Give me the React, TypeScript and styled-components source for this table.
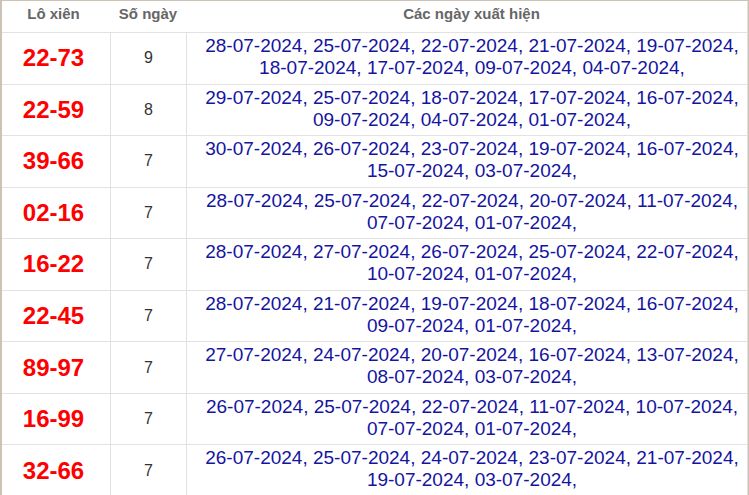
import React from "react";
import styled, { createGlobalStyle } from "styled-components";

const GlobalStyle = createGlobalStyle`
  html, body { margin: 0; padding: 0; background: #fff; }
  body { font-family: "Liberation Sans", Arial, sans-serif; }
`;

const Frame = styled.div`
  width: 749px;
  box-sizing: border-box;
  border-top: 1px solid #cdc2b6;
  border-left: 2px solid #cdc2b6;
  border-right: 1px solid #cdc2b6;
`;

const Table = styled.div`
  border-right: 1px solid #e2e2e2;
`;

const HeaderRow = styled.div`
  display: grid;
  grid-template-columns: 108px 76px 1fr;
  height: 32px;
  box-sizing: border-box;
  border-bottom: 1px solid #e2e2e2;
`;

const HeadCell = styled.div<{ $padLeft?: number; $padRight?: number }>`
  padding-top: 4px;
  padding-left: ${(p) => p.$padLeft ?? 0}px;
  padding-right: ${(p) => p.$padRight ?? 0}px;
  text-align: center;
  font-size: 15px;
  line-height: 18px;
  font-weight: bold;
  color: #666;
`;

const Row = styled.div`
  display: grid;
  grid-template-columns: 108px 76px 1fr;
  height: 51.56px;
  box-sizing: border-box;
  border-bottom: 1px solid #e2e2e2;
`;

const PairCell = styled.div`
  display: flex;
  align-items: center;
  justify-content: center;
  padding-right: 5px;
  font-size: 24px;
  font-weight: bold;
  color: #ff0000;
`;

const CountCell = styled.div`
  display: flex;
  align-items: center;
  justify-content: center;
  border-left: 1px solid #e2e2e2;
  font-size: 16px;
  color: #333;
`;

const DatesCell = styled.div`
  border-left: 1px solid #e2e2e2;
  padding: 2px 0 0 10px;
  text-align: center;
  font-size: 19px;
  line-height: 22px;
  color: #1414a0;
`;

const DateLink = styled.span`
  color: #1414a0;
`;

type Item = { pair: string; count: number; days: string[] };

const data: Item[] = [
  { pair: "22-73", count: 9, days: ["28", "25", "22", "21", "19", "18", "17", "09", "04"] },
  { pair: "22-59", count: 8, days: ["29", "25", "18", "17", "16", "09", "04", "01"] },
  { pair: "39-66", count: 7, days: ["30", "26", "23", "19", "16", "15", "03"] },
  { pair: "02-16", count: 7, days: ["28", "25", "22", "20", "11", "07", "01"] },
  { pair: "16-22", count: 7, days: ["28", "27", "26", "25", "22", "10", "01"] },
  { pair: "22-45", count: 7, days: ["28", "21", "19", "18", "16", "09", "01"] },
  { pair: "89-97", count: 7, days: ["27", "24", "20", "16", "13", "08", "03"] },
  { pair: "16-99", count: 7, days: ["26", "25", "22", "11", "10", "07", "01"] },
  { pair: "32-66", count: 7, days: ["26", "25", "24", "23", "21", "19", "03"] },
];

export default function App() {
  return (
    <>
      <GlobalStyle />
      <Frame>
        <Table>
          <HeaderRow>
            <HeadCell $padRight={5}>Lô xiên</HeadCell>
            <HeadCell>Số ngày</HeadCell>
            <HeadCell $padLeft={10}>Các ngày xuất hiện</HeadCell>
          </HeaderRow>
          {data.map((r) => (
            <Row key={r.pair}>
              <PairCell>{r.pair}</PairCell>
              <CountCell>{r.count}</CountCell>
              <DatesCell>
                {r.days.map((d, i) => (
                  <React.Fragment key={i}>
                    <DateLink>{`${d}-07-2024`}</DateLink>
                    {", "}
                  </React.Fragment>
                ))}
              </DatesCell>
            </Row>
          ))}
        </Table>
      </Frame>
    </>
  );
}
